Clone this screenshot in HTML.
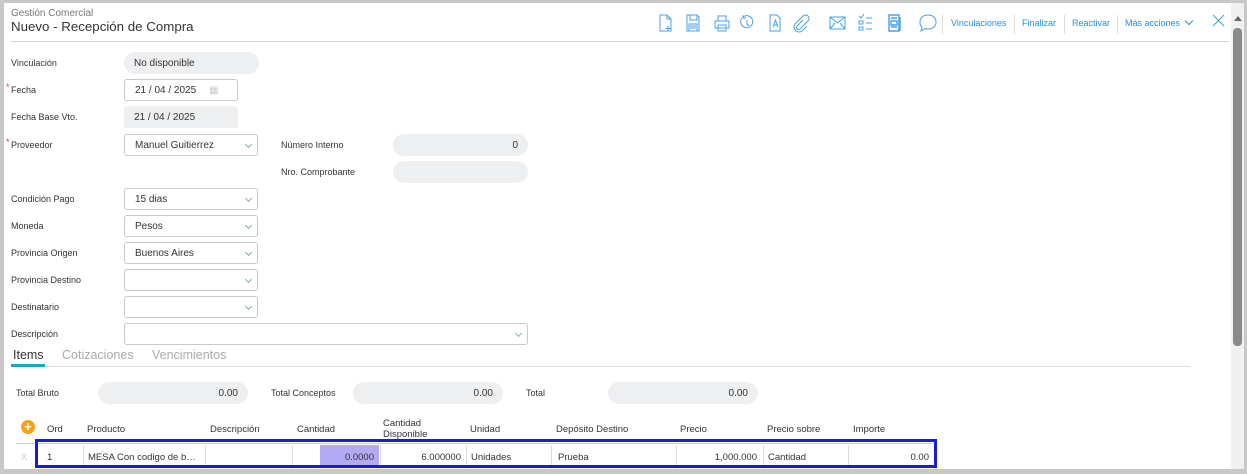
<!DOCTYPE html><html><head><meta charset="utf-8"><style>
*{box-sizing:border-box;margin:0;padding:0}
body{width:1247px;height:474px;background:#fff;font-family:"Liberation Sans",sans-serif;position:relative;overflow:hidden;color:#333}
.a{position:absolute}
.lbl{position:absolute;font-size:9px;color:#333;left:11px}
.req::before{content:"*";color:#d33;position:absolute;left:-5px;top:-3px;font-size:9px}
.f{position:absolute;height:22px;font-size:10px;line-height:23px;padding-left:10px;color:#333}
.pill{background:#eeeff1;border-radius:11px}
.box{border:1px solid #c9c9c9;border-radius:3px;background:#fff;line-height:21px}
.sel::after{content:"";position:absolute;right:6px;top:7px;width:4px;height:4px;border-right:1px solid #8aa;border-bottom:1px solid #8aa;transform:rotate(45deg)}
.lk{position:absolute;top:18px;font-size:9px;color:#2a8ce0}
.sep{position:absolute;top:15px;width:1px;height:19px;background:#ddd}
.th{position:absolute;top:424px;font-size:9.5px;color:#333}
.td{position:absolute;top:452px;font-size:9.5px;color:#333}
.cb{position:absolute;top:445px;width:1px;height:21px;background:#ddd}
</style></head><body>
<div class="a" style="left:0;top:0;width:1247px;height:3px;background:#c8c8c8"></div>
<div class="a" style="left:0;top:0;width:4px;height:474px;background:#c8c8c8"></div>
<div class="a" style="left:0;top:469px;width:1247px;height:5px;background:#c8c8c8"></div>
<div class="a" style="left:1244px;top:0;width:3px;height:474px;background:#c8c8c8"></div>
<div class="a" style="left:1231px;top:3px;width:13px;height:466px;background:#f0f0f0"></div>
<div class="a" style="left:1233px;top:28px;width:9px;height:318px;background:#8a8a8a;border-radius:4px"></div>
<div class="a" style="left:1234px;top:16px;width:0;height:0;border-left:4px solid transparent;border-right:4px solid transparent;border-bottom:5px solid #666"></div>

<div class="a" style="left:11px;top:8px;font-size:10px;color:#777">Gestión Comercial</div>
<div class="a" style="left:11px;top:19px;font-size:13.3px;color:#333">Nuevo - Recepción de Compra</div>
<div class="a" style="left:11px;top:41px;width:1218px;height:1px;background:#d5d5d5"></div>

<svg class="a" style="left:655px;top:12px" width="290" height="22" fill="none" stroke="#45a0ee" stroke-width="1">
<path d="M5 3h7l4 4v12H5z M12 3v4h4 M13 14v5 M10.5 16.5h5"/>
<path d="M32 3h10l2 2v14H32z M35 3v5h7V3 M34 12h8v7h-8z M35 14h6 M35 16h6"/>
<path d="M60 9h14v7H60z M63 9V4h8v5 M63 13h8v6h-8z"/>
<path d="M88 5a6 6 0 1 1-1 1 M88 3v3h3 M92 8v4l2 2"/>
<path d="M115 3h7l3 3v13h-10z M118 15l2.5-7 2.5 7 M119 13h3"/>
<path d="M148 8l-6 6a2 2 0 0 0 3 3l8-8a3.5 3.5 0 0 0-5-5l-8 8a5 5 0 0 0 7 7l5-5"/>
<path d="M175 5h15v12h-15z M175 5l7.5 6 7.5-6 M175 17l5-6 M190 17l-5-6"/>
<path d="M204 4l2 2 3-4 M204 9h4v3h-4z M204 15h4v3h-4z M211 6h6 M211 11h6 M211 17h6"/>
<path d="M234 3h10v16h-10z M236 6h6 M236 9h6v4h-6z M236 15h6 M245 5v14" stroke-width="1.4"/>
<path d="M273 3c5 0 8 3 8 7s-3 7-8 7c-1 0-2 0-3-.5L266 19l1-4c-2-1.5-2-3-2-5 0-4 3-7 8-7z"/>
</svg>
<div class="sep" style="left:942px"></div>
<div class="lk" style="left:951px">Vinculaciones</div>
<div class="sep" style="left:1014px"></div>
<div class="lk" style="left:1022px">Finalizar</div>
<div class="sep" style="left:1064px"></div>
<div class="lk" style="left:1072px">Reactivar</div>
<div class="sep" style="left:1117px"></div>
<div class="lk" style="left:1125px">Más acciones</div>
<div class="a" style="left:1186px;top:18px;width:6px;height:6px;border-right:1px solid #2a8ce0;border-bottom:1px solid #2a8ce0;transform:rotate(45deg)"></div>
<svg class="a" style="left:1212px;top:14px" width="13" height="13" stroke="#45a0ee" stroke-width="1.1"><path d="M1 1l11 11M12 1L1 12"/></svg>

<div class="lbl" style="top:58px">Vinculación</div>
<div class="f pill" style="left:124px;top:52px;width:135px">No disponible</div>
<div class="lbl req" style="top:85px">Fecha</div>
<div class="f box" style="left:124px;top:79px;width:114px">21 / 04 / 2025<span style="position:absolute;left:84px;top:0;color:#ccc;font-size:10px">▦</span></div>
<div class="lbl" style="top:112px">Fecha Base Vto.</div>
<div class="f" style="left:124px;top:106px;width:114px;background:#eeeff1;border-radius:3px">21 / 04 / 2025</div>
<div class="lbl req" style="top:140px">Proveedor</div>
<div class="f box sel" style="left:124px;top:134px;width:134px">Manuel Guitierrez</div>
<div class="a" style="left:281px;top:140px;font-size:9px">Número Interno</div>
<div class="f pill" style="left:393px;top:134px;width:135px;text-align:right;padding-right:10px">0</div>
<div class="a" style="left:281px;top:167px;font-size:9px">Nro. Comprobante</div>
<div class="f pill" style="left:393px;top:161px;width:135px"></div>
<div class="lbl" style="top:194px">Condición Pago</div>
<div class="f box sel" style="left:124px;top:188px;width:134px">15 dias</div>
<div class="lbl" style="top:221px">Moneda</div>
<div class="f box sel" style="left:124px;top:215px;width:134px">Pesos</div>
<div class="lbl" style="top:248px">Provincia Origen</div>
<div class="f box sel" style="left:124px;top:242px;width:134px">Buenos Aires</div>
<div class="lbl" style="top:275px">Provincia Destino</div>
<div class="f box sel" style="left:124px;top:269px;width:134px"></div>
<div class="lbl" style="top:302px">Destinatario</div>
<div class="f box sel" style="left:124px;top:296px;width:134px"></div>
<div class="lbl" style="top:329px">Descripción</div>
<div class="f box sel" style="left:124px;top:323px;width:404px"></div>

<div class="a" style="left:13px;top:348px;font-size:12.5px;color:#333">Items</div>
<div class="a" style="left:62px;top:348px;font-size:12.5px;color:#aaa">Cotizaciones</div>
<div class="a" style="left:152px;top:348px;font-size:12.5px;color:#aaa">Vencimientos</div>
<div class="a" style="left:12px;top:366px;width:1178px;height:1px;background:#ddd"></div>
<div class="a" style="left:11px;top:364px;width:34px;height:3px;background:#1aa6c8"></div>

<div class="a" style="left:16px;top:388px;font-size:9px">Total Bruto</div>
<div class="f pill" style="left:98px;top:382px;width:150px;text-align:right;padding-right:10px">0.00</div>
<div class="a" style="left:271px;top:388px;font-size:9px">Total Conceptos</div>
<div class="f pill" style="left:353px;top:382px;width:150px;text-align:right;padding-right:10px">0.00</div>
<div class="a" style="left:526px;top:388px;font-size:9px">Total</div>
<div class="f pill" style="left:608px;top:382px;width:150px;text-align:right;padding-right:10px">0.00</div>

<div class="a" style="left:21px;top:420px;width:14px;height:14px;border-radius:7px;background:#f5a11a;color:#fff;font-size:13px;line-height:13px;text-align:center;font-weight:bold">+</div>
<div class="th" style="left:47px">Ord</div>
<div class="th" style="left:87px">Producto</div>
<div class="th" style="left:210px">Descripción</div>
<div class="th" style="left:297px">Cantidad</div>
<div class="th" style="left:383px;top:418px;line-height:11px">Cantidad<br>Disponible</div>
<div class="th" style="left:470px">Unidad</div>
<div class="th" style="left:556px">Depósito Destino</div>
<div class="th" style="left:680px">Precio</div>
<div class="th" style="left:767px">Precio sobre</div>
<div class="th" style="left:853px">Importe</div>
<div class="a" style="left:16px;top:443px;width:920px;height:1px;background:#ccc"></div>
<div class="a" style="left:320px;top:445px;width:59px;height:21px;background:#b3a9f5"></div>
<div class="cb" style="left:83px"></div><div class="cb" style="left:205px"></div><div class="cb" style="left:292px"></div><div class="cb" style="left:380px"></div><div class="cb" style="left:466px"></div><div class="cb" style="left:551px"></div><div class="cb" style="left:676px"></div><div class="cb" style="left:763px"></div><div class="cb" style="left:848px"></div>
<div class="td" style="left:21px;color:#ccc">X</div>
<div class="td" style="left:47px">1</div>
<div class="td" style="left:88px">MESA Con codigo de b…</div>
<div class="td" style="left:320px;width:54px;text-align:right">0.0000</div>
<div class="td" style="left:380px;width:81px;text-align:right">6.000000</div>
<div class="td" style="left:471px">Unidades</div>
<div class="td" style="left:558px">Prueba</div>
<div class="td" style="left:676px;width:81px;text-align:right">1,000.000</div>
<div class="td" style="left:768px">Cantidad</div>
<div class="td" style="left:848px;width:81px;text-align:right">0.00</div>
<div class="a" style="left:35px;top:439px;width:902px;height:29px;border:3px solid #1a1ad8"></div>
</body></html>
